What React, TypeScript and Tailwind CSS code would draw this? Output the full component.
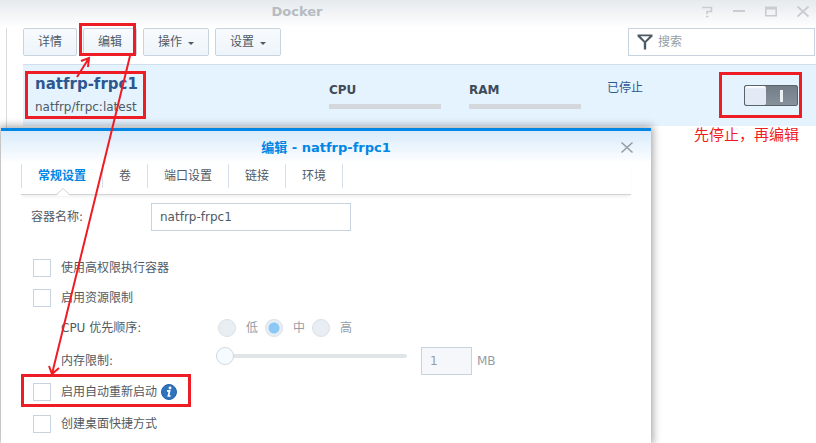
import type { ReactNode } from "react";

const uiFont = "font-['DejaVu_Sans','Noto_Sans_CJK_SC',sans-serif]";

function ToolButton({ children, menu = false }: { children: ReactNode; menu?: boolean }) {
  return (
    <button
      type="button"
      className="flex h-7 items-center gap-1.5 rounded-xs border border-[#c8d3e0] bg-linear-to-b from-[#f8fbfe] to-[#edf4fa] px-3.5 text-xs text-[#505a64]"
    >
      {children}
      {menu && (
        <svg viewBox="0 0 6 3" className="mt-0.5 h-[3px] w-1.5" aria-hidden="true">
          <path d="M0 0H6L3 3Z" fill="#505a64" />
        </svg>
      )}
    </button>
  );
}

function WindowControls() {
  return (
    <div className="flex w-[120px] items-center justify-end gap-4 pr-[5px] text-[#c8cdd2]">
      <button type="button" aria-label="帮助">
        <svg viewBox="0 0 16 16" className="size-4" fill="none" stroke="currentColor" strokeWidth="1.6">
          <path d="M3 3.5H12.5V7.5H8V10M7 12.5H9.5" />
        </svg>
      </button>
      <button type="button" aria-label="最小化">
        <svg viewBox="0 0 16 16" className="size-4" fill="none" stroke="currentColor" strokeWidth="2">
          <path d="M2 7H14" />
        </svg>
      </button>
      <button type="button" aria-label="最大化">
        <svg viewBox="0 0 16 16" className="size-4" fill="none" stroke="currentColor" strokeWidth="1.6">
          <path d="M2.8 3V11.7H13.2V3" />
          <path d="M2 4H14" strokeWidth="3" />
        </svg>
      </button>
      <button type="button" aria-label="关闭">
        <svg viewBox="0 0 16 16" className="size-4" fill="none" stroke="currentColor" strokeWidth="1.8">
          <path d="M2.5 2.5L13.5 12.5M13.5 2.5L2.5 12.5" />
        </svg>
      </button>
    </div>
  );
}

function Meter({ label }: { label: string }) {
  return (
    <div className="w-28">
      <div className="text-xs leading-4 font-bold text-[#414b55]">{label}</div>
      <div className="mt-1.5 h-[5px] bg-[#d4d8dc]" />
    </div>
  );
}

function CheckRow({ label, children }: { label: string; children?: ReactNode }) {
  return (
    <div className="flex items-center">
      <label className="flex items-center gap-2.5">
        <input type="checkbox" className="size-[18px] appearance-none border border-[#c8d3e0] bg-white" />
        {label}
      </label>
      {children}
    </div>
  );
}

function Priority({ label, checked = false }: { label: string; checked?: boolean }) {
  return (
    <label className="flex items-center gap-2.5">
      <input
        type="radio"
        name="priority"
        defaultChecked={checked}
        disabled
        className="size-[18px] appearance-none rounded-full border border-[#d6e0ec] bg-[#e9eef3] checked:bg-[radial-gradient(circle,#8cc8f5_5px,#e9eef3_6px)]"
      />
      {label}
    </label>
  );
}

const tabs = ["常规设置", "卷", "端口设置", "链接", "环境"];

function EditDialog() {
  return (
    <section
      role="dialog"
      aria-labelledby="dialog-title"
      className="absolute top-32 bottom-0 left-px w-[650px] border-t-3 border-[#0086e5] bg-white shadow-[0_0_8px_2px_rgba(0,0,0,0.35)]"
    >
      <header className="flex h-[33px] items-center bg-linear-to-b from-[#d8ebfb] to-white pr-4 pl-8">
        <h2 id="dialog-title" className="flex-1 text-center text-[13px] font-bold text-[#0086e5]">
          编辑 - natfrp-frpc1
        </h2>
        <button type="button" aria-label="关闭" className="text-[#959da5]">
          <svg viewBox="0 0 16 16" className="size-4" fill="none" stroke="currentColor" strokeWidth="1.6">
            <path d="M2.5 2.5L13.5 12.5M13.5 2.5L2.5 12.5" />
          </svg>
        </button>
      </header>
      <div className="px-5">
        <nav className="flex h-[31px] items-start border-b border-[#d0d3d6] shadow-[0_3px_3px_-1px_rgba(0,0,0,0.06)]">
          <div role="tablist" className="flex h-6 border-l border-[#d5dfea]">
            {tabs.map((tab, i) => (
              <button
                key={tab}
                type="button"
                role="tab"
                aria-selected={i === 0}
                className="relative border-r border-[#d5dfea] px-4 text-xs text-[#505a64] aria-selected:font-bold aria-selected:text-[#0086e5]"
              >
                {tab}
                {i === 0 && (
                  <svg viewBox="0 0 14 8" className="absolute top-6 left-[34px] h-2 w-3.5" aria-hidden="true">
                    <path d="M0 8L7 1L14 8Z" fill="#fff" />
                    <path d="M0.5 6.5L7 0.5L13.5 6.5" fill="none" stroke="#d0d3d6" />
                  </svg>
                )}
              </button>
            ))}
          </div>
        </nav>
        <form className="pt-2 text-xs text-[#505a64]">
          <div className="flex h-7 items-center pl-2.5">
            <label htmlFor="container-name" className="w-[120px]">
              容器名称:
            </label>
            <input
              id="container-name"
              defaultValue="natfrp-frpc1"
              className="h-7 w-[200px] border border-[#c8d3e0] px-2 text-[#505a64]"
            />
          </div>
          <div className="mt-7 grid auto-rows-[18px] gap-3 pl-3">
            <CheckRow label="使用高权限执行容器" />
            <CheckRow label="启用资源限制" />
            <div role="radiogroup" aria-labelledby="priority-label" className="flex items-center pl-7">
              <span id="priority-label" className="w-[157px]">
                CPU 优先顺序:
              </span>
              <div className="flex gap-[7px] text-[#959da5]">
                <Priority label="低" />
                <Priority label="中" checked />
                <Priority label="高" />
              </div>
            </div>
          </div>
          <div className="mt-2.5 flex h-7 items-center pl-10">
            <label htmlFor="memory-range" className="w-[155px]">
              内存限制:
            </label>
            <input
              id="memory-range"
              type="range"
              min="1"
              defaultValue="1"
              disabled
              className="mb-2.5 h-[18px] w-[191px] appearance-none bg-transparent [&::-webkit-slider-runnable-track]:h-1 [&::-webkit-slider-runnable-track]:rounded-full [&::-webkit-slider-runnable-track]:bg-[#e0e5e7] [&::-webkit-slider-thumb]:-mt-[7px] [&::-webkit-slider-thumb]:size-[18px] [&::-webkit-slider-thumb]:appearance-none [&::-webkit-slider-thumb]:rounded-full [&::-webkit-slider-thumb]:border [&::-webkit-slider-thumb]:border-[#d0d8e0] [&::-webkit-slider-thumb]:bg-[#f6fbff]"
            />
            <input
              aria-label="内存限制 (MB)"
              defaultValue="1"
              disabled
              className="ml-3.5 h-7 w-[51px] border border-[#c8d3e0] bg-[#f5f7fa] px-2 text-[#959da5]"
            />
            <span className="ml-[5px] text-[#959da5]">MB</span>
          </div>
          <div className="mt-2 grid auto-rows-[18px] gap-3.5 pl-3">
            <CheckRow label="启用自动重新启动">
              <svg viewBox="0 0 16 16" className="ml-1 size-4" aria-hidden="true">
                <circle cx="8" cy="8" r="7.5" fill="#2f73bd" stroke="#2262ab" />
                <circle cx="9" cy="4" r="1.4" fill="#fff" />
                <path d="M6 6.8H8.6L7.4 12H9.6" fill="none" stroke="#fff" strokeWidth="1.7" />
              </svg>
            </CheckRow>
            <CheckRow label="创建桌面快捷方式" />
          </div>
        </form>
      </div>
    </section>
  );
}

function Annotations() {
  return (
    <>
      <svg
        viewBox="0 0 816 443"
        className="pointer-events-none absolute top-0 left-0 h-[443px] w-[816px]"
        fill="none"
        stroke="#ee1c24"
        aria-hidden="true"
      >
        <g strokeWidth="3">
          <rect x="80.5" y="24.5" width="54" height="30" />
          <rect x="26.5" y="72.5" width="118" height="45" />
          <rect x="720.5" y="73.5" width="80" height="43" />
          <rect x="22.5" y="375.5" width="167" height="30" />
        </g>
        <g strokeWidth="2">
          <path d="M77 77L89 58M81 61L89 58L88 67" />
          <path d="M130 56L52 374M49 366L52 374L59 368" />
        </g>
      </svg>
      <p className="absolute top-[124px] right-[17px] text-[15px] leading-[22px] text-[#ee1c24]">先停止，再编辑</p>
    </>
  );
}

export default function App() {
  return (
    <main className={`relative flex h-screen min-h-[443px] flex-col overflow-hidden bg-white ${uiFont}`}>
      <div className="absolute inset-x-0 top-0 h-7 bg-linear-to-b from-[#e6eaee] to-white" />
      <header className="relative flex h-[23px] items-center">
        <h1 className="flex-1 pr-[102px] text-center text-[13px] font-bold text-[#b5bbc1]">Docker</h1>
        <WindowControls />
      </header>
      <div className="relative mt-[5px] ml-1.5 flex-1 border-l border-[#d8dbde] pl-4">
        <div className="flex justify-between pr-px">
          <div className="flex gap-1.5">
            <ToolButton>详情</ToolButton>
            <ToolButton>编辑</ToolButton>
            <ToolButton menu>操作</ToolButton>
            <ToolButton menu>设置</ToolButton>
          </div>
          <label className="flex h-7 w-[187px] items-center gap-[5px] border border-[#c8d3e0] bg-white pl-2">
            <svg viewBox="0 0 16 16" className="size-4" aria-hidden="true">
              <path d="M0.5 0.5H15.5V2.5L9.2 8.5V15.5H6.8V8.5L0.5 2.5ZM3.5 2.3L8 7L12.5 2.3Z" fill="#505a64" fillRule="evenodd" />
            </svg>
            <input
              type="search"
              aria-label="搜索"
              placeholder="搜索"
              className="min-w-0 flex-1 text-xs placeholder:text-[#959da5]"
            />
          </label>
        </div>
        <article className="mt-2 flex h-[62px] border-t border-[#d0dfee] bg-[#e5f3ff]">
          <div className="flex-1 pt-2 pl-3">
            <h2 className="text-[15px] leading-[22px] font-bold text-[#2d5791]">natfrp-frpc1</h2>
            <p className="mt-1 text-xs leading-4 text-[#505a64]">natfrp/frpc:latest</p>
          </div>
          <div className="flex gap-7 pt-[17px]">
            <Meter label="CPU" />
            <Meter label="RAM" />
          </div>
          <p className="ml-[26px] w-[137px] pt-3.5 text-xs leading-[18px] text-[#2d5791]">已停止</p>
          <label className="relative mt-5 mr-[18px] flex h-[21px] w-[54px] rounded-xs border border-[#59636c] bg-linear-to-b from-[#737d87] to-[#87919b]">
            <input type="checkbox" role="switch" aria-label="运行" className="sr-only" />
            <span className="w-[21px] rounded-xs bg-linear-to-b from-white from-5% to-[#e3e9f5] to-15%" />
            <span className="flex flex-1 items-center justify-center">
              <span className="h-3 w-[3px] bg-[#eef1f4]" />
            </span>
          </label>
        </article>
      </div>
      <EditDialog />
      <Annotations />
    </main>
  );
}
